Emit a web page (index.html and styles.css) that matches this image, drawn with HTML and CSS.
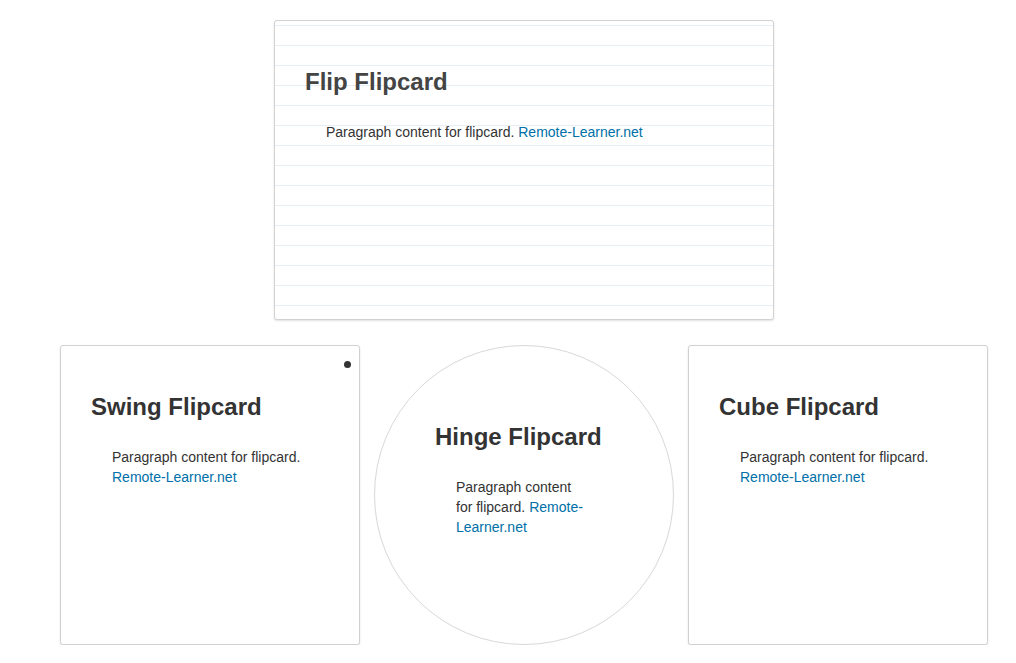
FILE: index.html
```html
<!DOCTYPE html>
<html>
<head>
<meta charset="utf-8">
<link rel="stylesheet" href="styles.css">
</head>
<body>
<div class="page">
  <div class="row-top">
    <div class="card card-lined">
      <h2 class="title title-flip">Flip Flipcard</h2>
      <p class="text">Paragraph content for flipcard. <a href="#">Remote-Learner.net</a></p>
    </div>
  </div>
  <div class="row-bottom">
    <div class="card card-swing">
      <span class="dot"></span>
      <h2 class="title">Swing Flipcard</h2>
      <p class="text">Paragraph content for flipcard. <a href="#">Remote-Learner.net</a></p>
    </div>
    <div class="card card-circle">
      <h2 class="title">Hinge Flipcard</h2>
      <p class="text text-narrow">Paragraph content for flipcard. <a href="#">Remote-Learner.net</a></p>
    </div>
    <div class="card">
      <h2 class="title">Cube Flipcard</h2>
      <p class="text">Paragraph content for flipcard. <a href="#">Remote-Learner.net</a></p>
    </div>
  </div>
</div>
</body>
</html>
```
FILE: styles.css
```css
html, body {
  margin: 0;
  padding: 0;
  background: #fff;
}
body {
  font-family: "Liberation Sans", Arial, Helvetica, sans-serif;
  color: #333;
}
.page {
  width: 928px;
  padding: 20px 28px 0 60px;
}
.row-top {
  display: flex;
  justify-content: center;
}
.row-bottom {
  display: flex;
  gap: 14px;
  margin-top: 25px;
}
.card {
  box-sizing: border-box;
  width: 300px;
  height: 300px;
  border: 1px solid #d2d2d2;
  border-radius: 3px;
  box-shadow: 0 1px 2px rgba(0, 0, 0, 0.12);
  padding: 30px;
  background: #fff;
  position: relative;
}
.card-lined {
  width: 500px;
  background-color: #fff;
  background-image: linear-gradient(#e6edf3 1px, transparent 1px);
  background-size: 100% 20px;
  background-position: 0 4px;
}
.card-circle {
  border-radius: 50%;
  border-color: #d8d8d8;
  box-shadow: none;
  padding: 60px;
}
.title {
  font-size: 24px;
  font-weight: bold;
  line-height: 26px;
  margin: 18px 0 27px;
  color: #333;
}
.title-flip {
  color: #444;
}
.text {
  font-size: 14px;
  line-height: 20px;
  margin: 0 0 0 21px;
  color: #333;
}
.text-narrow {
  max-width: 130px;
}
.text a {
  color: #0070a8;
  text-decoration: none;
}
.dot {
  position: absolute;
  top: 15px;
  right: 8px;
  width: 7px;
  height: 7px;
  border-radius: 50%;
  background: #333;
}
```
